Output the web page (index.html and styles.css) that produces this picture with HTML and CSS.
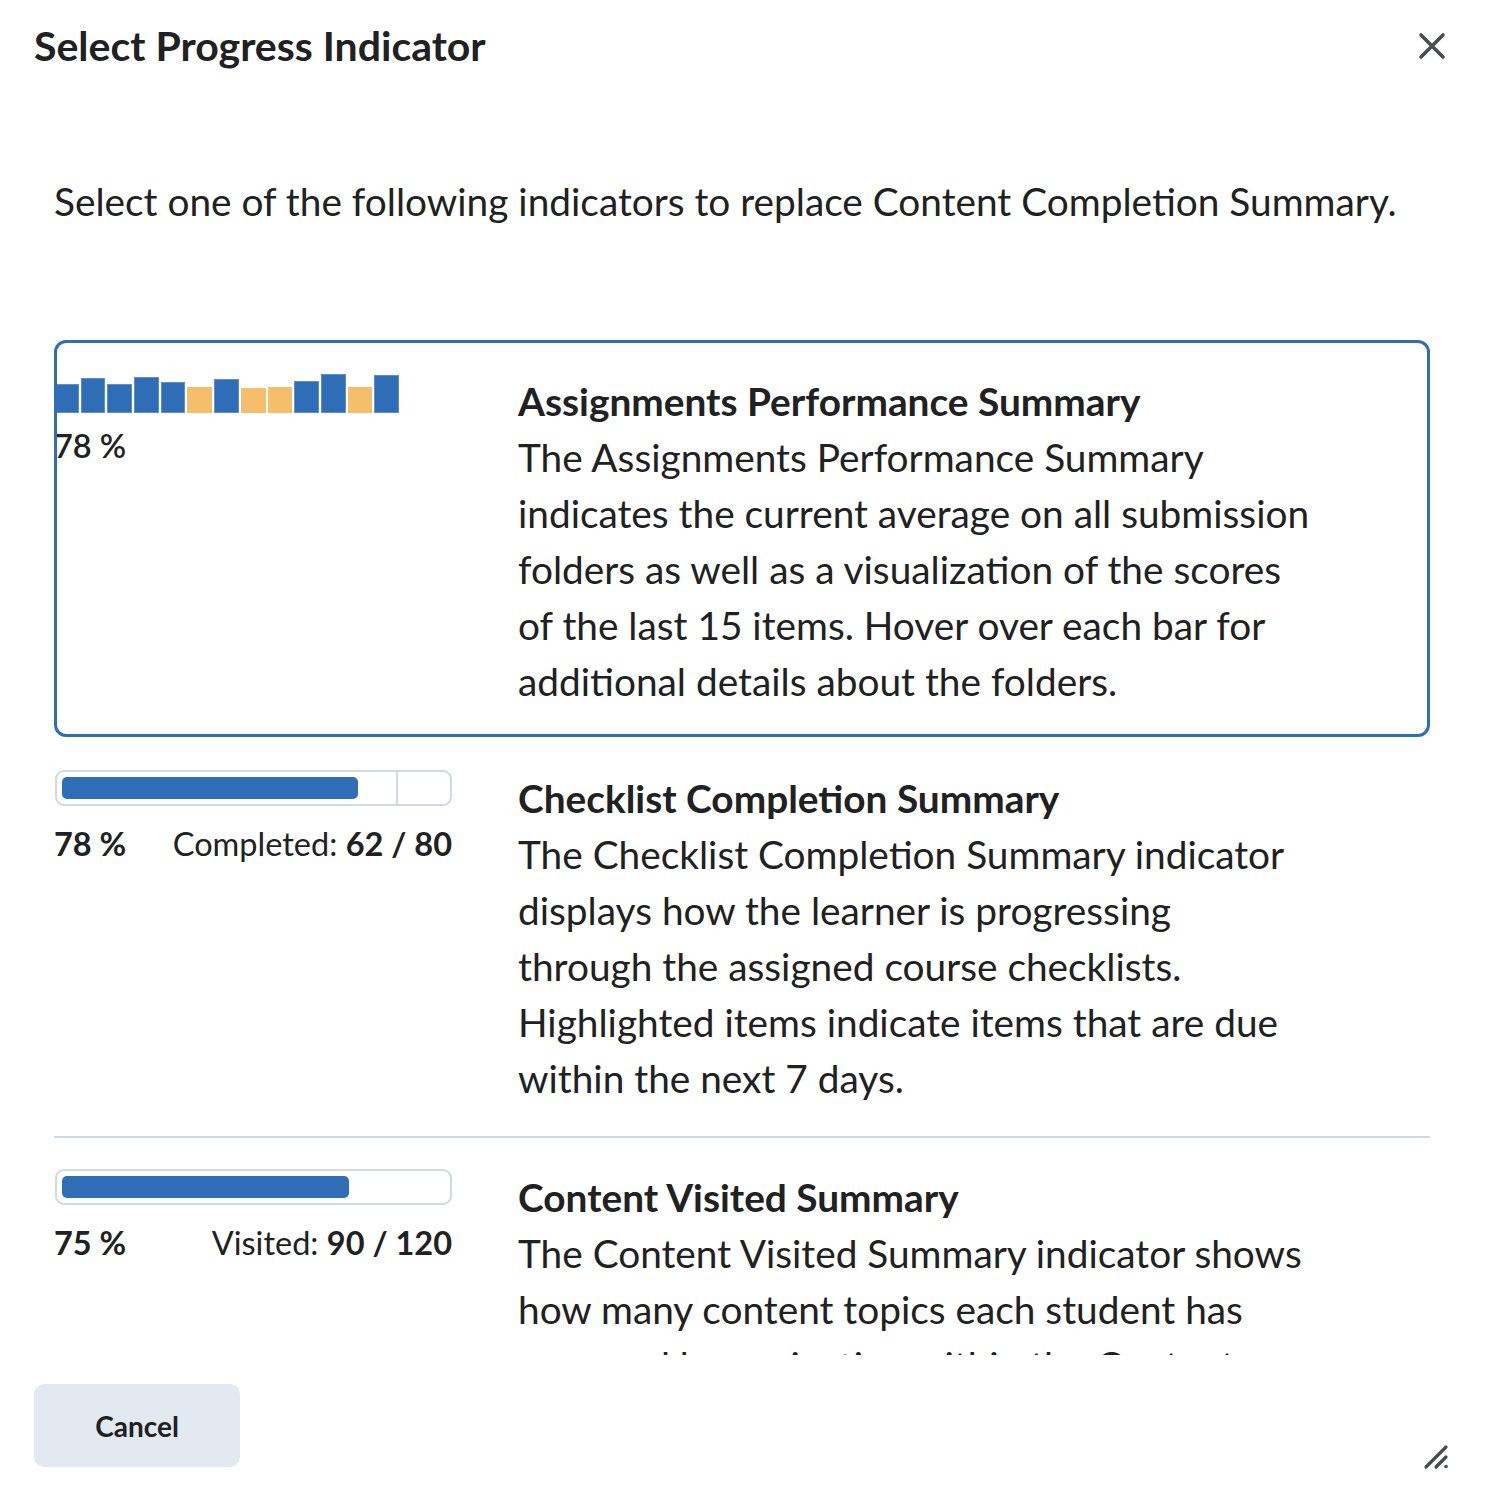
FILE: index.html
```html
<!DOCTYPE html>
<html lang="en">
<head>
<meta charset="utf-8">
<title>Select Progress Indicator</title>
<link rel="stylesheet" href="styles.css">
</head>
<body>
<div class="dialog">
  <header class="dlg-header">
    <h1 class="dlg-title">Select Progress Indicator</h1>
    <button class="dlg-close" aria-label="Close">
      <svg width="28" height="28" viewBox="0 0 28 28"><path d="M3 3 L25 25 M25 3 L3 25" stroke="#494c4e" stroke-width="3.6" stroke-linecap="round" fill="none"/></svg>
    </button>
  </header>
  <div class="dlg-body">
    <p class="intro">Select one of the following indicators to replace Content Completion Summary.</p>
    <ul class="options">
      <li class="option selected">
        <div class="indicator">
          <div class="bars">
            <span class="bar blue" style="height:29px"></span>
            <span class="bar blue" style="height:35px"></span>
            <span class="bar blue" style="height:29px"></span>
            <span class="bar blue" style="height:36px"></span>
            <span class="bar blue" style="height:31px"></span>
            <span class="bar orange" style="height:26px"></span>
            <span class="bar blue" style="height:34px"></span>
            <span class="bar orange" style="height:25px"></span>
            <span class="bar orange" style="height:26px"></span>
            <span class="bar blue" style="height:32px"></span>
            <span class="bar blue" style="height:39px"></span>
            <span class="bar orange" style="height:26px"></span>
            <span class="bar blue" style="height:38px"></span>
          </div>
          <div class="pct pct-medium">78 %</div>
        </div>
        <div class="info">
          <h2 class="info-title">Assignments Performance Summary</h2>
          <p class="info-desc">The Assignments Performance Summary indicates the current average on all submission folders as well as a visualization of the scores of the last 15 items. Hover over each bar for additional details about the folders.</p>
        </div>
      </li>
      <li class="option divided">
        <div class="indicator">
          <div class="meter">
            <div class="meter-fill" style="width:77.3%"></div>
            <div class="meter-mark" style="left:86.3%"></div>
          </div>
          <div class="stats">
            <span class="pct">78 %</span>
            <span class="count">Completed: <b>62 / 80</b></span>
          </div>
        </div>
        <div class="info">
          <h2 class="info-title">Checklist Completion Summary</h2>
          <p class="info-desc">The Checklist Completion Summary indicator displays how the learner is progressing through the assigned course checklists. Highlighted items indicate items that are due within the next 7 days.</p>
        </div>
      </li>
      <li class="option last">
        <div class="indicator">
          <div class="meter">
            <div class="meter-fill" style="width:74.9%"></div>
          </div>
          <div class="stats">
            <span class="pct">75 %</span>
            <span class="count">Visited: <b>90 / 120</b></span>
          </div>
        </div>
        <div class="info">
          <h2 class="info-title">Content Visited Summary</h2>
          <p class="info-desc">The Content Visited Summary indicator shows how many content topics each student has accessed by navigating within the Content tool.</p>
        </div>
      </li>
    </ul>
  </div>
  <footer class="dlg-footer">
    <button class="btn">Cancel</button>
  </footer>
  <svg class="resize-grip" width="30" height="30" viewBox="0 0 30 30"><path d="M4 27 L24 7 M14 27 L24 17" stroke="#494c4e" stroke-width="3.2" stroke-linecap="round" fill="none"/><circle cx="24" cy="26.5" r="1.8" fill="#494c4e"/></svg>
</div>
</body>
</html>
```

FILE: styles.css
```css
* { box-sizing: border-box; }
html, body { margin: 0; padding: 0; background: #ffffff; }
body {
  font-family: Lato, "Noto Sans", sans-serif;
  color: #202122;
}
.dialog {
  position: relative;
  width: 1486px;
  height: 1506px;
  padding: 0 34px;
  overflow: hidden;
}
.dlg-header {
  height: 100px;
  display: flex;
  justify-content: space-between;
  align-items: flex-start;
  padding-top: 18px;
}
.dlg-title {
  margin: 0;
  font-size: 41px;
  line-height: 56px;
  font-weight: 700;
  color: #202122;
}
.dlg-close {
  margin: 14px 6px 0 0;
  padding: 0;
  width: 28px;
  height: 28px;
  border: 0;
  background: none;
}
.dlg-close svg { display: block; }
.dlg-body {
  height: 1255px;
  overflow: hidden;
  padding: 0 22px 0 20px;
}
.intro {
  margin: 73px 0 111px;
  font-size: 38.8px;
  line-height: 56px;
}
.options {
  list-style: none;
  margin: 0;
  padding: 0;
}
.option {
  position: relative;
  display: flex;
  gap: 66px;
  padding: 33px 0 28px;
}
.option.selected::after {
  content: "";
  position: absolute;
  inset: 0;
  border: 3px solid #2f6db7;
  border-radius: 12px;
  pointer-events: none;
}
.option.divided { border-bottom: 2px solid #d3d9e3; padding-bottom: 30px; }
.option.last { padding-top: 31px; }
.indicator {
  width: 398px;
  flex: none;
}
.bars {
  display: flex;
  align-items: flex-end;
  gap: 2px;
  height: 40px;
}
.bar {
  display: block;
  width: 24.7px;
  flex: none;
}
.bar.blue { background: #2f6db7; box-shadow: inset 0 0 0 1px #5d8fcb; }
.bar.orange { background: #f5be6a; }
.pct {
  font-size: 32.5px;
  line-height: 48px;
  font-weight: 700;
}
.pct-medium {
  display: block;
  margin-top: 9px;
  font-weight: 600;
}
.meter {
  position: relative;
  height: 36px;
  margin: 0 0 0 1px;
  border: 2px solid #d3d9e3;
  border-radius: 9px;
  padding: 5px;
}
.meter-fill {
  height: 22px;
  background: #2f6db7;
  border-radius: 5px;
}
.meter-mark {
  position: absolute;
  top: 0;
  bottom: 0;
  width: 2px;
  background: #d3d9e3;
}
.stats {
  display: flex;
  justify-content: space-between;
  align-items: baseline;
  margin-top: 14px;
}
.count {
  font-size: 32.5px;
  line-height: 48px;
  font-weight: 400;
}
.count b { font-weight: 700; }
.info { flex: none; width: 794px; }
.info-title {
  margin: 0;
  font-size: 38.8px;
  line-height: 56px;
  font-weight: 700;
}
.info-desc {
  margin: 0;
  font-size: 38.8px;
  line-height: 56px;
}
.dlg-footer {
  padding-top: 29px;
}
.btn {
  width: 206px;
  height: 83px;
  border: 0;
  border-radius: 10px;
  background: #e3e9f1;
  font-family: Lato, "Noto Sans", sans-serif;
  font-size: 28px;
  font-weight: 700;
  color: #202122;
}
.resize-grip {
  position: absolute;
  right: 34px;
  bottom: 36px;
}
```
